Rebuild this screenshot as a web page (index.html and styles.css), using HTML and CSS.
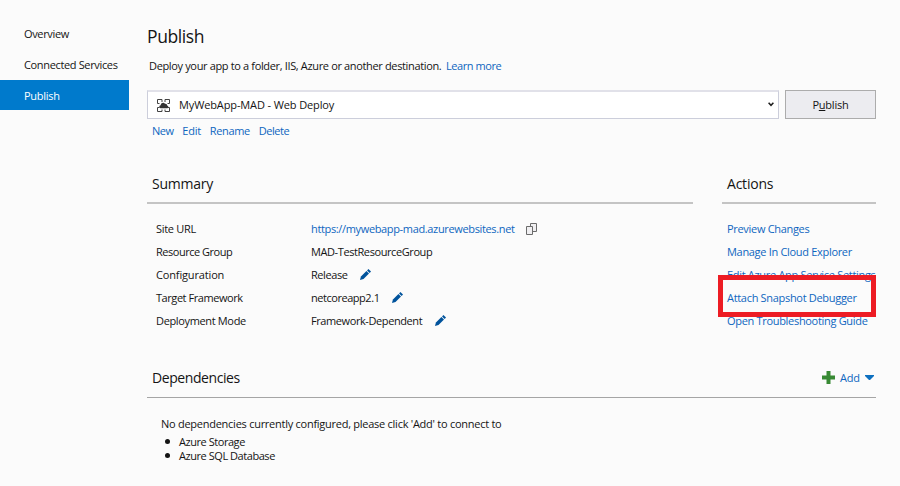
FILE: index.html
```html
<!DOCTYPE html>
<html lang="en">
<head>
<meta charset="utf-8">
<title>Publish</title>
<link rel="stylesheet" href="styles.css">
</head>
<body>
<svg class="defs" width="0" height="0">
  <symbol id="pencil" viewBox="0 0 12 12">
    <path d="M0 12 1 8.2 7 2.2 9.8 5 3.8 11Z"/>
    <path d="M7.7 1.5 9.2 0 12 2.8 10.5 4.3Z"/>
  </symbol>
</svg>
<div class="app">
  <nav class="side">
    <a class="tab overview">Overview</a>
    <a class="tab">Connected Services</a>
    <a class="tab active">Publish</a>
  </nav>
  <main class="main">
    <h1>Publish</h1>
    <p class="intro"><span>Deploy your app to a folder, IIS, Azure or another destination.</span><a class="learn">Learn more</a></p>
    <div class="profile">
      <div class="combo">
        <svg class="target" width="13" height="13" viewBox="0 0 13 13">
          <path d="M2.5 4.5h-2v-4h4.500v2.500M8 3V.5h4.500v4h-2M2.500 8.500h-2v4H5V10.500M8 10.500v2h4.500v-4h-2" fill="none" stroke="#424242"/>
          <path d="M3.500 9.200C1.800 9 1.900 6.500 3.600 6.200 4 3.600 6.900 3 8 4.800c1.500-.3 2 .7 2.100 1.600C11.800 6.600 11.600 9.100 10 9.200Z" fill="#333"/>
        </svg>
        <span class="combo-text">MyWebApp-MAD - Web Deploy</span>
        <svg class="chevron" width="6" height="5" viewBox="0 0 6 5"><path d="M.6.7 3 3.3 5.4.7" fill="none" stroke="#1e1e1e" stroke-width="1.5"/></svg>
      </div>
      <button class="publish"><span>P<u>u</u>blish</span></button>
    </div>
    <div class="links"><a class="new">New</a><a class="edit">Edit</a><a class="rename">Rename</a><a class="delete">Delete</a></div>
    <div class="columns">
      <section class="summary">
        <h2>Summary</h2>
        <dl>
          <dt class="site">Site URL</dt>
          <dd><a class="url">https://mywebapp-mad.azurewebsites.net</a>
            <svg class="copy" width="11" height="12" viewBox="0 0 11 12" fill="#f0eff1" stroke="#6b6b6b"><path d="M4.5.5h6v8h-6z"/><path d="M.5 3.5h6v8h-6z"/></svg></dd>
          <dt class="group">Resource Group</dt>
          <dd><span class="v-group">MAD-TestResourceGroup</span></dd>
          <dt class="config">Configuration</dt>
          <dd><span class="v-release">Release</span><svg class="pen"><use href="#pencil"/></svg></dd>
          <dt class="framework">Target Framework</dt>
          <dd><span class="v-core">netcoreapp2.1</span><svg class="pen"><use href="#pencil"/></svg></dd>
          <dt class="mode">Deployment Mode</dt>
          <dd><span class="v-mode">Framework-Dependent</span><svg class="pen"><use href="#pencil"/></svg></dd>
        </dl>
      </section>
      <section class="actions">
        <h2>Actions</h2>
        <ul>
          <li><a class="preview">Preview Changes</a></li>
          <li><a class="manage">Manage In Cloud Explorer</a></li>
          <li><a class="settings">Edit Azure App Service Settings</a></li>
          <li><a class="attach">Attach Snapshot Debugger</a></li>
          <li><a class="guide">Open Troubleshooting Guide</a></li>
        </ul>
        <div class="highlight"></div>
      </section>
    </div>
    <section class="deps">
      <header>
        <h2>Dependencies</h2>
        <a class="add">
          <svg width="13" height="13" viewBox="0 0 13 13"><path d="M4.5 0h4v4.5H13v4H8.5V13h-4V8.5H0v-4h4.5Z" fill="#388a34"/></svg>
          <span>Add</span>
          <svg class="caret" width="9" height="5" viewBox="0 0 9 5"><path d="M0 0h9v1L5 5H4L0 1Z" fill="#0e70c0"/></svg>
        </a>
      </header>
      <p class="none">No dependencies currently configured, please click 'Add' to connect to</p>
      <ul class="services">
        <li><span class="storage">Azure Storage</span></li>
        <li><span class="sql">Azure SQL Database</span></li>
      </ul>
    </section>
  </main>
</div>
</body>
</html>
```
FILE: styles.css
```css
* { box-sizing: border-box; }
body {
  margin: 0;
  background: #fbfbfb;
  color: #141414;
  font: 11px/16px "Open Sans", "Noto Sans", sans-serif;
  letter-spacing: -0.35px;
}
h1, h2, p, ul, dl, dd { margin: 0; padding: 0; font-weight: 400; }
ul { list-style: none; }
a { color: #0e66c0; white-space: nowrap; }
svg { flex: none; display: block; }
.defs { position: absolute; }
.app { display: flex; height: 486px; overflow: hidden; }
.side { width: 147px; padding-top: 18px; flex: none; }
.tab {
  display: flex;
  align-items: center;
  width: 129px;
  height: 31px;
  padding: 1px 0 0 24px;
  color: #141414;
}
.tab.active {
  height: 30px;
  padding: 2px 0 0 24px;
  background: #007acc;
  color: #fff;
  letter-spacing: -0.28px;
}
.main { width: 729px; padding-top: 24px; }
h1 { font-size: 17.5px; line-height: 24px; letter-spacing: -0.4px; }
.intro { display: flex; gap: 4.5px; margin: 10px 0 16px 2px; white-space: nowrap; }
.learn { letter-spacing: -0.43px; }
.profile { display: flex; gap: 6px; height: 29px; }
.combo {
  display: flex;
  align-items: center;
  width: 632px;
  padding: 0 4px 0 9px;
  background: #fff;
  border: 1px solid #cccedb;
  border-top: 2px solid #e1e1e9;
}
.combo-text { margin-left: 9px; letter-spacing: -0.12px; }
.chevron { margin: 0 0 1px auto; }
.publish {
  width: 91px;
  padding: 0;
  border: 1px solid #acacac;
  background: #ececf0;
  color: #141414;
  font: inherit;
  letter-spacing: -0.2px;
}
.links { display: flex; gap: 8.8px; margin: 4px 0 0 5px; height: 16px; }
.new { letter-spacing: -0.5px; }
.edit { letter-spacing: -0.2px; }
.delete { letter-spacing: -0.45px; }
.columns { display: flex; gap: 29px; margin-top: 34px; }
.summary { width: 546px; }
.actions { position: relative; width: 154px; }
h2 { padding-left: 5px; font-size: 14px; line-height: 22px; letter-spacing: -0.22px; }
.columns h2 { height: 31px; border-bottom: 2px solid #c4c4c4; }
dl {
  display: grid;
  grid-template-columns: 155px 1fr;
  grid-auto-rows: 22.8px;
  align-items: center;
  padding: 14px 0 0 9px;
}
dd { display: flex; align-items: center; }
.site { letter-spacing: -0.3px; }
.group { letter-spacing: -0.48px; }
.config { letter-spacing: -0.15px; }
.framework { letter-spacing: -0.44px; }
.v-group, .v-mode { letter-spacing: -0.41px; }
.v-release { letter-spacing: -0.43px; }
.v-core { letter-spacing: -0.46px; }
.copy { margin-left: 11px; }
.pen { width: 11px; height: 11px; margin-left: 13px; fill: #00539c; }
.actions ul { padding: 14px 0 0 5px; }
.actions li { display: flex; align-items: center; height: 22.8px; letter-spacing: -0.31px; }
.highlight {
  position: absolute;
  left: -4px;
  top: 102px;
  width: 158px;
  height: 42px;
  border: 5px solid #ed1c24;
}
.deps { margin-top: 35px; }
.deps header {
  display: flex;
  justify-content: space-between;
  height: 31px;
  border-bottom: 1px solid #a5a5a5;
}
.deps h2 { letter-spacing: -0.42px; }
.add { display: flex; align-items: center; height: 22px; padding-right: 2px; letter-spacing: -0.1px; }
.add span { margin: 0 5px 0 5px; }
.none { margin: 18px 0 0 14px; white-space: nowrap; letter-spacing: -0.26px; }
.services { margin: 3px 0 0 18px; letter-spacing: -0.45px; }
.services li { display: flex; align-items: center; gap: 9px; height: 14px; line-height: 14px; }
.services li::before { content: ""; width: 5px; height: 5px; border-radius: 50%; background: #141414; }
```
